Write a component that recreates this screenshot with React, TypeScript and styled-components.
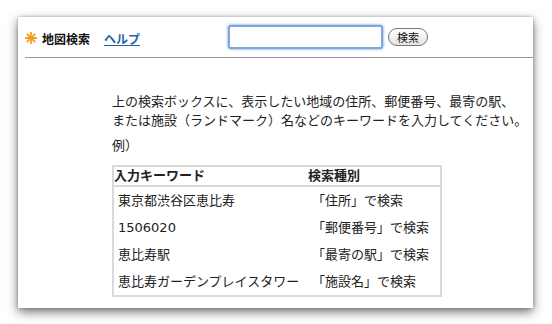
import styled, { createGlobalStyle } from "styled-components";

const GlobalStyle = createGlobalStyle`
    body {
        margin: 0;
        background: #fff;
        font-family: "DejaVu Sans", "Noto Sans CJK JP", sans-serif;
        color: #222;
    }
`;

const Page = styled.div`
    width: 552px;
    height: 324px;
    padding: 17px 19px 16px 18px;
    box-sizing: border-box;
`;

const Window = styled.div`
    height: 291px;
    background: #fff;
    box-shadow: 0 4px 10px rgba(0, 0, 0, 0.55), 0 0 3px rgba(0, 0, 0, 0.25);
`;

const Header = styled.div`
    display: grid;
    grid-template-columns: 203px auto;
    align-items: center;
    height: 40px;
    margin-left: 7px;
    border-bottom: 1px solid #9a9a9a;
`;

const Brand = styled.div`
    display: flex;
    align-items: center;
    padding-top: 2px;
`;

const Title = styled.span`
    margin-left: 5px;
    font-size: 12px;
    font-weight: bold;
    color: #111;
`;

const HelpLink = styled.a`
    margin-left: 14px;
    font-size: 12px;
    font-weight: bold;
    color: #1f63a6;
    text-decoration: underline;
`;

const SearchBox = styled.div`
    display: flex;
    align-items: center;
    gap: 5px;
`;

const SearchInput = styled.input`
    width: 155px;
    height: 24px;
    box-sizing: border-box;
    border: 2px solid #7ea8da;
    border-radius: 3px;
    box-shadow: 0 0 3px #5b8fd0;
    outline: none;
`;

const SearchButton = styled.button`
    width: 40px;
    height: 18px;
    padding: 0;
    border: 1px solid #777;
    border-radius: 9px;
    background: linear-gradient(#fff, #e4e4e4);
    font-family: "Noto Sans CJK JP", sans-serif;
    font-size: 11px;
    line-height: 14px;
    color: #111;
`;

const Content = styled.div`
    padding: 34px 0 0 94px;
    font-size: 13px;
    line-height: 19px;
`;

const Lead = styled.p`
    margin: 0;
    white-space: nowrap;
`;

const Example = styled.p`
    margin: 6px 0 10px;
`;

const KeyTable = styled.table`
    width: 330px;
    table-layout: fixed;
    border-collapse: collapse;
    border: 2px solid #d9d9d9;
`;

const HeadCell = styled.th`
    height: 18px;
    padding: 0;
    text-align: left;
    font-weight: bold;
    border-bottom: 2px solid #d9d9d9;
    line-height: 16px;
`;

const Cell = styled.td`
    height: 27px;
    padding: 0 0 0 4px;
    white-space: nowrap;
`;

function Star() {
    return (
        <svg width="12" height="12" viewBox="0 0 12 12">
            <g stroke="#f39c22" strokeWidth="1.8" strokeLinecap="round">
                <line x1="6" y1="0.8" x2="6" y2="11.2" />
                <line x1="0.8" y1="6" x2="11.2" y2="6" />
                <line x1="2.3" y1="2.3" x2="9.7" y2="9.7" />
                <line x1="9.7" y1="2.3" x2="2.3" y2="9.7" />
            </g>
        </svg>
    );
}

const rows = [
    ["東京都渋谷区恵比寿", "「住所」で検索"],
    ["1506020", "「郵便番号」で検索"],
    ["恵比寿駅", "「最寄の駅」で検索"],
    ["恵比寿ガーデンプレイスタワー", "「施設名」で検索"],
];

function App() {
    return (
        <Page>
            <GlobalStyle />
            <Window>
                <Header>
                    <Brand>
                        <Star />
                        <Title>地図検索</Title>
                        <HelpLink href="#">ヘルプ</HelpLink>
                    </Brand>
                    <SearchBox>
                        <SearchInput type="text" />
                        <SearchButton>検索</SearchButton>
                    </SearchBox>
                </Header>
                <Content>
                    <Lead>
                        上の検索ボックスに、表示したい地域の住所、郵便番号、最寄の駅、
                        <br />
                        または施設（ランドマーク）名などのキーワードを入力してください。
                    </Lead>
                    <Example>例）</Example>
                    <KeyTable>
                        <colgroup>
                            <col style={{ width: 195 }} />
                            <col />
                        </colgroup>
                        <thead>
                            <tr>
                                <HeadCell>入力キーワード</HeadCell>
                                <HeadCell>検索種別</HeadCell>
                            </tr>
                        </thead>
                        <tbody>
                            {rows.map(([key, kind]) => (
                                <tr key={key}>
                                    <Cell>{key}</Cell>
                                    <Cell>{kind}</Cell>
                                </tr>
                            ))}
                        </tbody>
                    </KeyTable>
                </Content>
            </Window>
        </Page>
    );
}

export default App;
